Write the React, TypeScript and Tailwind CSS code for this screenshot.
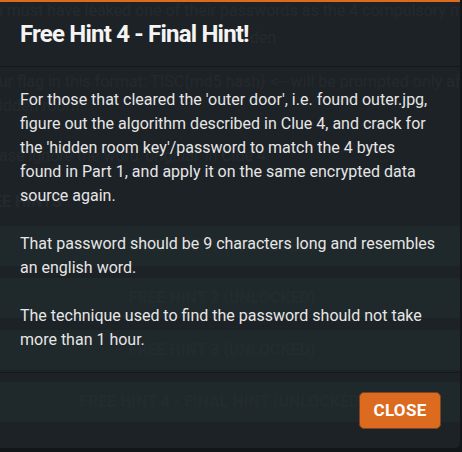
export default function App() {
  const hints = [
    "FREE HINT 1 (UNLOCKED)",
    "FREE HINT 2 (UNLOCKED)",
    "FREE HINT 3 (UNLOCKED)",
    "FREE HINT 4 - FINAL HINT (UNLOCKED)",
  ];

  return (
    <div className="relative w-[462px] h-[452px] overflow-hidden bg-[#121619] font-['Roboto',sans-serif]">
      {/* page behind the modal */}
      <div className="w-[460px] flex flex-col text-[16px] leading-[24px] text-[#6a7276] whitespace-nowrap overflow-hidden">
        <div className="h-[2px]" />
        <p className="-ml-[6px] h-[24px] leading-[18px]">u must have leaked one of their passwords as the 4 compulsory m</p>
        <p className="pl-[250px] h-[44px]">den</p>
        <p className="-ml-[1px]">ur flag in this format: TISC{"{"}md5 hash{"}"} &lt;-- will be prompted only after</p>
        <p className="-ml-[1px]">idden room.</p>
        <div className="h-[26px]" />
        <p className="-ml-[1px]">ase ignore the word 'original' in Clue 4.</p>
        <div className="h-[22px]" />
        <p className="-ml-[26px] font-['Liberation_Sans_Narrow','Roboto',sans-serif] font-bold">FREE HINTS</p>
        <div className="h-[12px]" />
        <div className="flex flex-col gap-[12px]">
          {hints.map((h) => (
            <div key={h} className="h-[40px] bg-[#2c6450] flex items-center justify-center pr-[16px] font-['Liberation_Sans_Narrow','Roboto',sans-serif] font-bold text-[#5a9080]">
              {h}
            </div>
          ))}
        </div>
      </div>

      {/* modal */}
      <div className="absolute top-0 left-0 w-[460px] h-[448px] flex flex-col bg-[#1e2428]/[0.93] border-t-2 border-[#dc6a1f] rounded-br-[5px]">
        <div className="h-[65px] flex items-center px-5 border-b border-[#14181b]">
          <h5 className="text-[24px] font-bold text-[#f4f4f4] font-['Liberation_Sans_Narrow','Roboto',sans-serif] tracking-[-0.8px]">
            Free Hint 4 - Final Hint!
          </h5>
        </div>
        <div className="flex-1 px-5 pt-[21px] text-[16px] leading-[24px] text-[#e6e6e6]">
          <p>
            For those that cleared the 'outer door', i.e. found outer.jpg, figure out the algorithm described in Clue 4, and crack for the 'hidden room key'/password to match the 4 bytes found in Part 1, and apply it on the same encrypted data source again.
          </p>
          <br />
          <p>That password should be 9 characters long and resembles an english word.</p>
          <br />
          <p>The technique used to find the password should not take more than 1 hour.</p>
        </div>
        <div className="h-[76px] flex items-center justify-end px-[19px] border-t border-[#14181b]">
          <button className="h-[37px] w-[82px] rounded-[5px] bg-[#dc6a1f] border border-[#7a4422] text-white font-bold text-[17px] font-['Liberation_Sans_Narrow','Roboto',sans-serif] tracking-[0.3px]">
            CLOSE
          </button>
        </div>
      </div>
    </div>
  );
}
